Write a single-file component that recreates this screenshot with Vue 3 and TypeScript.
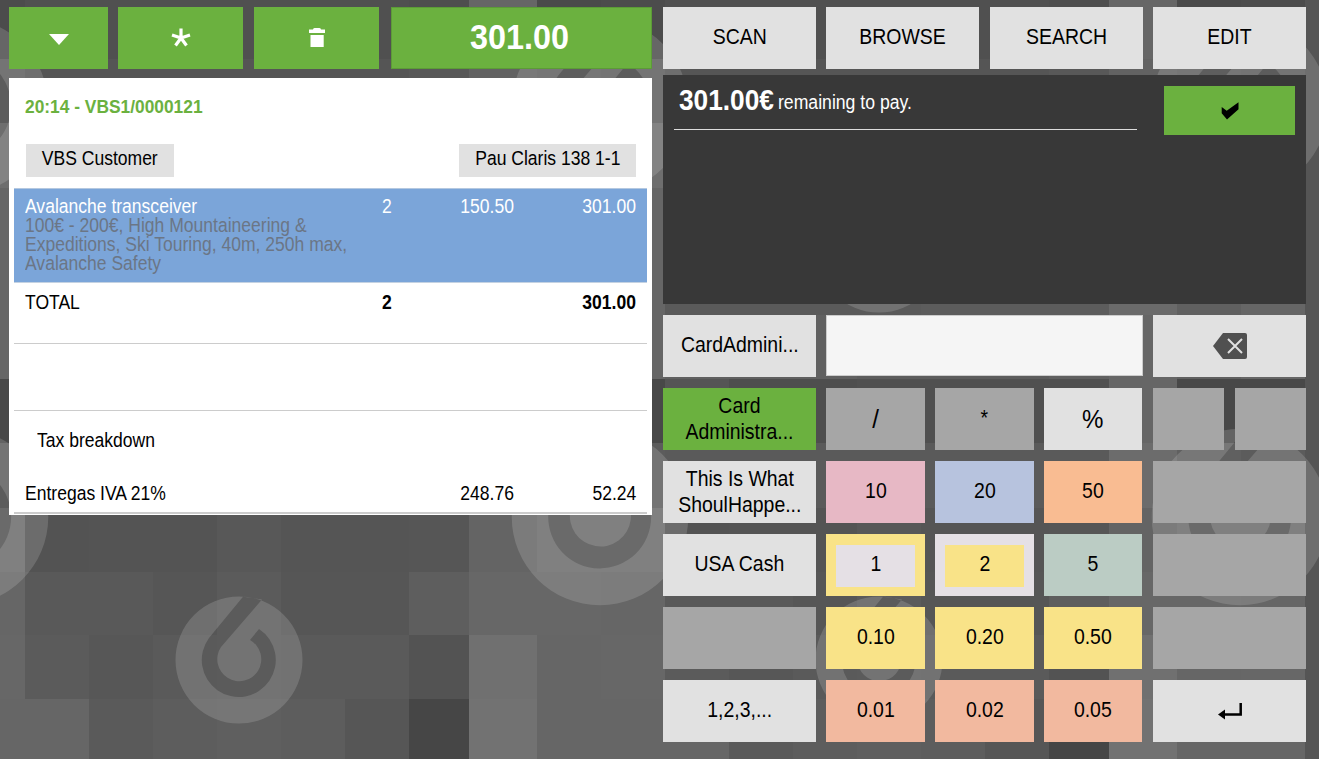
<script setup lang="ts">
const colEdges = [25, 89, 153, 217, 281, 345, 409, 469, 537, 601, 665]
const rowEdges = [0, 59, 123, 188, 252, 315, 379, 443, 508, 572, 635, 699, 759]
const tones: number[][] = [
  [0x50, 0x50, 0x50, 0x50, 0x50, 0x50, 0x4e, 0x66, 0x4a, 0x4c],
  [0x55, 0x55, 0x55, 0x55, 0x55, 0x55, 0x58, 0x62, 0x5e, 0x5c],
  [0x58, 0x58, 0x58, 0x58, 0x58, 0x58, 0x58, 0x60, 0x60, 0x6e],
  [0x5a, 0x5a, 0x5a, 0x5a, 0x5a, 0x5a, 0x5a, 0x64, 0x60, 0x66],
  [0x5a, 0x5a, 0x5a, 0x5a, 0x5c, 0x5c, 0x5c, 0x6a, 0x60, 0x66],
  [0x60, 0x60, 0x60, 0x5c, 0x5c, 0x5c, 0x60, 0x66, 0x60, 0x66],
  [0x55, 0x4e, 0x4e, 0x50, 0x50, 0x50, 0x50, 0x66, 0x48, 0x48],
  [0x5a, 0x5a, 0x5a, 0x5a, 0x5a, 0x5a, 0x5a, 0x6c, 0x60, 0x5c],
  [0x53, 0x54, 0x54, 0x58, 0x55, 0x55, 0x56, 0x64, 0x6a, 0x6a],
  [0x59, 0x59, 0x56, 0x5b, 0x56, 0x56, 0x5e, 0x67, 0x67, 0x66],
  [0x5b, 0x57, 0x5a, 0x5b, 0x5a, 0x5a, 0x53, 0x70, 0x66, 0x67],
  [0x66, 0x5a, 0x5d, 0x5f, 0x5d, 0x56, 0x46, 0x72, 0x66, 0x66]
]
interface Cell { x: number; y: number; w: number; h: number; fill: string }
const cells: Cell[] = []
for (let r = 0; r < tones.length; r++) {
  for (let t = -1; t < 2; t++) {
    for (let c = 0; c < 10; c++) {
      const v = tones[r][c]
      cells.push({
        x: colEdges[c] + t * 640,
        y: rowEdges[r],
        w: colEdges[c + 1] - colEdges[c],
        h: rowEdges[r + 1] - rowEdges[r],
        fill: `rgb(${v},${v},${v})`
      })
    }
  }
}
const logos = [
  { x: -40, y: 517, s: 1.39 },
  { x: 600, y: 517, s: 1.39 },
  { x: 1240, y: 517, s: 1.39 },
  { x: -40, y: 106, s: 1.39 },
  { x: 600, y: 106, s: 1.39 },
  { x: 1240, y: 106, s: 1.39 },
  { x: 239, y: 660, s: 1 },
  { x: 879, y: 660, s: 1 },
  { x: 239, y: 249, s: 1 },
  { x: 879, y: 249, s: 1 }
]
const logoPath =
  'M0 -63.5A63.5 63.5 0 1 1 0 63.5A63.5 63.5 0 1 1 0 -63.5Z' +
  'M4 -63.3L-30 -22A37 37 0 1 0 20 -31L11 -20A22 22 0 1 1 -18 -13L23 -60.5Z'

const topActions = ['SCAN', 'BROWSE', 'SEARCH', 'EDIT']

interface Key { label?: string; cls: string; inner?: string; enter?: boolean; text?: string }
const keys: Key[] = [
  { label: 'Card\nAdministra...', cls: 'green', text: 'multi' },
  { label: '/', cls: 'off', text: 'big' },
  { label: '*', cls: 'off' },
  { label: '%', cls: 'light narrow', text: 'big' },
  { cls: 'off narrow-last' },
  { cls: 'off shift' },
  { label: 'This Is What\nShoulHappe...', cls: 'light', text: 'multi' },
  { label: '10', cls: 'pink' },
  { label: '20', cls: 'blue' },
  { label: '50', cls: 'orange narrow' },
  { cls: 'off wide' },
  { label: 'USA Cash', cls: 'light' },
  { label: '1', cls: 'yellow', inner: 'lav' },
  { label: '2', cls: 'lav', inner: 'yellow' },
  { label: '5', cls: 'mint narrow' },
  { cls: 'off wide' },
  { cls: 'off' },
  { label: '0.10', cls: 'yellow' },
  { label: '0.20', cls: 'yellow' },
  { label: '0.50', cls: 'yellow narrow' },
  { cls: 'off wide' },
  { label: '1,2,3,...', cls: 'light' },
  { label: '0.01', cls: 'salmon' },
  { label: '0.02', cls: 'salmon' },
  { label: '0.05', cls: 'salmon narrow' },
  { cls: 'light wide', enter: true }
]
</script>

<template>
  <div class="page">
    <svg class="backdrop" width="1319" height="759" viewBox="0 0 1319 759" aria-hidden="true">
      <rect v-for="(c, i) in cells" :key="i" :x="c.x" :y="c.y" :width="c.w" :height="c.h" :fill="c.fill" />
      <path
        v-for="(l, i) in logos"
        :key="'l' + i"
        :d="logoPath"
        fill="#fff"
        fill-opacity="0.15"
        fill-rule="evenodd"
        :transform="`translate(${l.x} ${l.y}) scale(${l.s})`"
      />
    </svg>

    <section class="left">
      <div class="top-left">
        <button class="btn green w99">
          <svg class="tri" width="20" height="11" viewBox="0 0 20 11"><path d="M0 0H20L10 11Z" fill="#fff" /></svg>
        </button>
        <button class="btn green w125 ml10">
          <svg width="22" height="22" viewBox="0 0 22 22">
            <g stroke="#fff" stroke-width="3.2" fill="none">
              <path d="M11 11V1.5M11 11L20 8M11 11L16.5 18.5M11 11L5.5 18.5M11 11L2 8" />
            </g>
          </svg>
        </button>
        <button class="btn green w125 ml11">
          <svg width="16" height="20" viewBox="0 0 16 20">
            <path d="M4 1.5Q4 0 5.5 0H10.5Q12 0 12 1.5H16V5H0V1.5Z M1.5 7H14.7V19H1.5Z" fill="#fff" />
          </svg>
        </button>
        <button class="btn green amount ml12"><span class="sq">301.00</span></button>
      </div>

      <div class="ticket">
        <div class="title"><span class="sq-l">20:14 - VBS1/0000121</span></div>
        <div class="parties">
          <span class="tag cust"><span class="sq">VBS Customer</span></span>
          <span class="tag addr"><span class="sq">Pau Claris 138 1-1</span></span>
        </div>
        <div class="line selected">
          <div class="name">
            <div class="sq-l">Avalanche transceiver</div>
            <div class="desc sq-l">100€ - 200€, High Mountaineering &amp; Expeditions, Ski Touring, 40m, 250h max, Avalanche Safety</div>
          </div>
          <div class="sq-l">2</div>
          <div class="num"><span class="sq-r">150.50</span></div>
          <div class="num"><span class="sq-r">301.00</span></div>
        </div>
        <div class="line total">
          <div class="name"><span class="sq-l">TOTAL</span></div>
          <div class="b"><span class="sq-l">2</span></div>
          <div class="num"></div>
          <div class="num b"><span class="sq-r">301.00</span></div>
        </div>
        <div class="rule"></div>
        <div class="spacer"></div>
        <div class="rule"></div>
        <div class="tax-title"><span class="sq-l">Tax breakdown</span></div>
        <div class="line tax">
          <div class="name"><span class="sq-l">Entregas IVA 21%</span></div>
          <div></div>
          <div class="num"><span class="sq-r">248.76</span></div>
          <div class="num"><span class="sq-r">52.24</span></div>
        </div>
        <div class="end-rule"></div>
      </div>
    </section>

    <section class="right">
      <div class="top-right">
        <button v-for="(a, i) in topActions" :key="a" class="btn light" :class="{ ml1: i === 2 }"><span class="sq">{{ a }}</span></button>
      </div>

      <div class="pay">
        <div class="remaining"><strong class="sq-l">301.00€</strong><span class="sq-l note">remaining to pay.</span></div>
        <button class="btn green confirm">
          <svg width="18" height="18" viewBox="0 0 18 18">
            <path d="M.7 5L5.7 8.7L17.5 .3V7.3L6 17.5L.7 11.3Z" fill="#000" />
          </svg>
        </button>
      </div>

      <div class="entry">
        <button class="btn light"><span class="sq">CardAdmini...</span></button>
        <div class="field"></div>
        <button class="btn light">
          <svg width="34" height="26" viewBox="0 0 34 26">
            <path d="M10 0H32Q34 0 34 2V24Q34 26 32 26H10L0 13Z" fill="#505050" />
            <path d="M15 6L29 20M29 6L15 20" stroke="#e0e0e0" stroke-width="2" fill="none" />
          </svg>
        </button>
      </div>

      <div class="keypad">
        <button v-for="(k, i) in keys" :key="i" class="btn" :class="k.cls">
          <span v-if="k.inner" class="inner" :class="k.inner"><span class="sq">{{ k.label }}</span></span>
          <svg v-else-if="k.enter" width="24" height="17" viewBox="0 0 24 17">
            <path d="M22.7 0V11.5H5" stroke="#000" stroke-width="2.5" fill="none" />
            <path d="M0 11.5L7 6.5V16.5Z" fill="#000" />
          </svg>
          <span v-else-if="k.label" class="sq" :class="k.text">{{ k.label }}</span>
        </button>
      </div>
    </section>
  </div>
</template>

<style>
body {
  margin: 0;
  background: #555;
}
</style>

<style scoped>
.page {
  position: relative;
  width: 1319px;
  height: 759px;
  overflow: hidden;
  display: flex;
  gap: 11px;
  padding: 7px 13px 0 9px;
  box-sizing: border-box;
  font-family: "Liberation Sans", Arial, sans-serif;
  font-size: 19.3px;
  color: #000;
}
.backdrop {
  position: absolute;
  left: 0;
  top: 0;
}
.left,
.right {
  position: relative;
  width: 643px;
  flex: none;
}
/* The reference's type is drawn slightly narrow: taller glyphs at the same advance. */
.sq,
.sq-l,
.sq-r {
  display: inline-block;
  transform: scaleX(0.909);
  white-space: pre-line;
}
.sq { transform-origin: center; flex: none; }
.sq-l { transform-origin: left center; }
.sq-r { transform-origin: right center; }
.btn {
  display: flex;
  align-items: center;
  justify-content: center;
  border: 0;
  padding: 0;
  margin: 0;
  height: 62px;
  box-sizing: border-box;
  font: inherit;
  font-size: 21.4px;
  line-height: 26px;
  color: #000;
  text-align: center;
  overflow: hidden;
}
.btn .sq { margin-bottom: 2px; }
.btn .sq.multi { margin-bottom: 0; }
.btn .sq.big { font-size: 26.5px; margin-bottom: 0; }
.inner .sq { margin-bottom: 4px; }
.green { background: #6bb13f; }
.light { background: #e1e1e1; }
.off { background: #a6a6a6; }
.pink { background: #e7b8c5; }
.blue { background: #b7c3de; }
.orange { background: #f9bc92; }
.yellow { background: #f9e388; }
.mint { background: #bbccc4; }
.lav { background: #e5e0e5; }
.salmon { background: #f2b99f; }

.top-left {
  display: flex;
}
.w99 { width: 99px; }
.w125 { width: 125px; }
.ml10 { margin-left: 10px; }
.ml11 { margin-left: 11px; }
.ml12 { margin-left: 12px; }
.ml1 { margin-left: 1px; }
.tri { margin-top: 3px; }
.amount {
  width: 261px;
  border: 1px solid #5c9c36;
  color: #fff;
  font-weight: 700;
  font-size: 35.6px;
}
.amount .sq { margin-right: 5px; }

.ticket {
  margin-top: 9px;
  height: 437px;
  box-sizing: border-box;
  padding: 0 5px;
  background: #fff;
  overflow: hidden;
}
.title {
  height: 66px;
  box-sizing: border-box;
  padding: 19px 0 0 11px;
  color: #6bb13f;
  font-weight: 700;
  font-size: 19.1px;
  line-height: 20px;
}
.parties {
  display: flex;
  justify-content: space-between;
  margin: 0 11px 11px 12px;
}
.tag {
  display: flex;
  justify-content: center;
  height: 33px;
  line-height: 29px;
  background: #e1e1e1;
  box-sizing: border-box;
}
.cust { width: 148px; }
.addr { width: 177px; }
.line {
  display: grid;
  grid-template-columns: 368px 58px 74px 122px;
  padding-right: 11px;
  line-height: 19px;
}
.name { padding-left: 11px; }
.name .sq-l { white-space: nowrap; }
.num { text-align: right; }
.b { font-weight: 700; }
.selected {
  height: 95px;
  box-sizing: border-box;
  padding-top: 8px;
  background: #7ba5d9;
  border-top: 1px solid #b4c8e0;
  border-bottom: 1px solid #c4d2e2;
  color: #fff;
}
.name .desc {
  display: block;
  width: 372px;
  color: #6b7686;
  white-space: normal;
}
.total {
  height: 60px;
  padding-top: 10px;
  box-sizing: border-box;
}
.rule {
  height: 1px;
  background: #ccc;
}
.spacer { height: 66px; }
.tax-title {
  padding: 20px 0 0 23px;
  line-height: 20px;
}
.tax { margin-top: 33px; }
.end-rule {
  margin-top: 9px;
  height: 2px;
  background: #ccc;
}

.top-right {
  display: flex;
  gap: 10px;
}
.top-right .btn { width: 153px; }
.pay {
  margin-top: 6px;
  height: 229px;
  background: #383838;
  display: flex;
  align-items: flex-start;
  justify-content: space-between;
  padding: 0 11px;
  color: #fff;
  box-sizing: border-box;
}
.remaining {
  display: flex;
  align-items: baseline;
  width: 463px;
  height: 55px;
  box-sizing: border-box;
  padding: 10px 0 0 5px;
  border-bottom: 1px solid #ddd;
}
.remaining strong {
  font-size: 28.9px;
  line-height: 30px;
  margin-right: -5px;
}
.remaining .note {
  font-size: 19.4px;
  transform: translateY(-1px) scaleX(0.909);
}
.confirm {
  width: 131px;
  height: 49px;
  margin-top: 11px;
}
.entry {
  margin-top: 11px;
  display: grid;
  grid-template-columns: 153px 317px 153px;
  column-gap: 10px;
}
.field {
  height: 61px;
  box-sizing: border-box;
  background: #f5f5f5;
  border: 1px solid #ccc;
}
.keypad {
  margin-top: 11px;
  display: grid;
  grid-template-columns: 153px 99px 99px 99px 71px 72px;
  column-gap: 10px;
  row-gap: 11px;
}
.narrow { width: 98px; }
.shift { margin-left: 1px; }
.wide { grid-column: span 2; }
.inner {
  display: flex;
  align-items: center;
  justify-content: center;
  width: 79px;
  height: 42px;
  margin-top: 1px;
  flex: none;
}
</style>
